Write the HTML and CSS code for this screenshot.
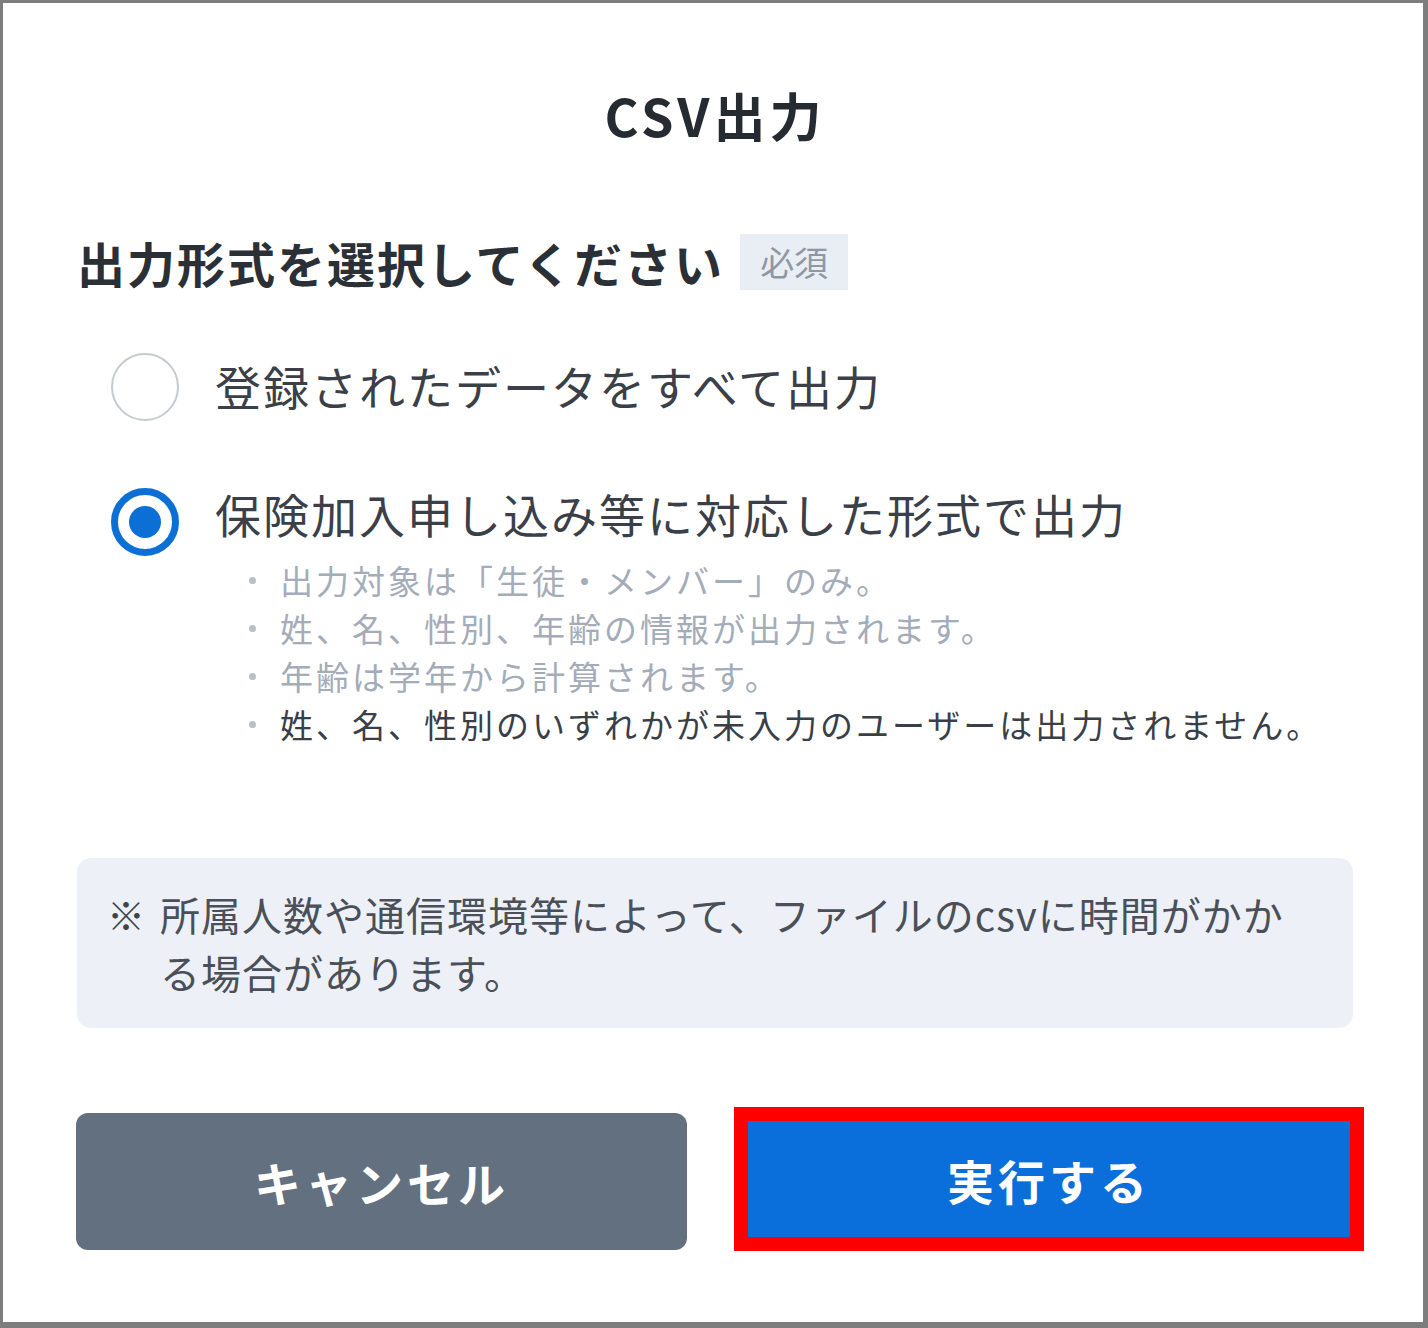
FILE: index.html
```html
<!DOCTYPE html>
<html lang="ja">
<head>
<meta charset="utf-8">
<title>CSV出力</title>
<link rel="stylesheet" href="styles.css">
</head>
<body>
<div class="frame">
  <h1 class="title">CSV出力</h1>

  <div class="field-head">
    <span class="field-label">出力形式を選択してください</span>
    <span class="badge">必須</span>
  </div>

  <div class="options">
    <div class="option">
      <span class="radio"></span>
      <div class="option-body">
        <div class="option-text">登録されたデータをすべて出力</div>
      </div>
    </div>
    <div class="option option-checked">
      <span class="radio radio-on"><span class="radio-dot"></span></span>
      <div class="option-body">
        <div class="option-text">保険加入申し込み等に対応した形式で出力</div>
        <ul class="notes">
          <li>出力対象は「生徒・メンバー」のみ。</li>
          <li>姓、名、性別、年齢の情報が出力されます。</li>
          <li>年齢は学年から計算されます。</li>
          <li class="note-strong">姓、名、性別のいずれかが未入力のユーザーは出力されません。</li>
        </ul>
      </div>
    </div>
  </div>

  <div class="notice">
    <span class="notice-mark">※</span>
    <p class="notice-text">所属人数や通信環境等によって、ファイルのcsvに時間がかかる場合があります。</p>
  </div>

  <div class="actions">
    <button class="btn btn-cancel">キャンセル</button>
    <div class="highlight">
      <button class="btn btn-primary">実行する</button>
    </div>
  </div>
</div>
</body>
</html>
```

FILE: styles.css
```css
* { box-sizing: border-box; }
html, body { margin: 0; padding: 0; background: #ffffff; }
body {
  font-family: "Noto Sans CJK JP", "Noto Sans", sans-serif;
  color: #2b2f36;
}
.frame {
  width: 1428px;
  height: 1328px;
  border-style: solid;
  border-color: #7d7d7d;
  border-width: 3px 5px 6px 3px;
  padding: 77px 70px 0 74px;
  background: #ffffff;
}
.title {
  margin: 0;
  font-size: 52px;
  line-height: 70px;
  font-weight: 700;
  text-align: center;
  color: #262a31;
  letter-spacing: 4px;
}
.field-head {
  margin-top: 84px;
  display: flex;
  align-items: center;
  height: 56px;
}
.field-label {
  font-size: 48px;
  font-weight: 700;
  letter-spacing: 2px;
  line-height: 56px;
  color: #2b2f36;
}
.badge {
  margin-left: 16px;
  height: 56px;
  padding: 0 20px;
  background: #e9eef5;
  color: #8e97a2;
  font-size: 34px;
  line-height: 56px;
}
.options {
  margin-top: 63px;
  padding-left: 34px;
}
.option {
  display: flex;
  align-items: flex-start;
}
.option + .option { margin-top: 67px; }
.radio {
  flex: 0 0 68px;
  width: 68px;
  height: 68px;
  border-radius: 50%;
  border: 2px solid #c6cad0;
  display: flex;
  align-items: center;
  justify-content: center;
}
.radio-on {
  border: 7px solid #0b6fd6;
}
.radio-dot {
  width: 32px;
  height: 32px;
  border-radius: 50%;
  background: #0b6fd6;
}
.option-body {
  margin-left: 36px;
}
.option-text {
  font-size: 46px;
  line-height: 64px;
  letter-spacing: 2px;
  color: #3b4048;
}
.option-checked .option-text {
  line-height: 50px;
}
.notes {
  list-style: none;
  margin: 18px 0 0 0;
  padding: 0;
}
.notes li {
  display: flex;
  align-items: center;
  font-size: 33px;
  line-height: 48px;
  letter-spacing: 3px;
  color: #a3acb8;
}
.notes li::before {
  content: "";
  flex: 0 0 7px;
  width: 7px;
  height: 7px;
  border-radius: 50%;
  background: #b8bfc8;
  margin: 0 24px 0 34px;
}
.notes li.note-strong { color: #3a3f47; }
.notice {
  margin-top: 110px;
  display: flex;
  align-items: flex-start;
  background: #edf1f7;
  border-radius: 14px;
  padding: 27px 40px 27px 30px;
  height: 170px;
}
.notice-mark {
  flex: 0 0 53px;
  font-size: 38px;
  font-weight: 700;
  line-height: 58px;
  color: #3f444c;
}
.notice-text {
  margin: 0;
  font-size: 40px;
  line-height: 58px;
  letter-spacing: 1px;
  color: #4b5058;
}
.actions {
  margin-top: 79px;
  display: flex;
  align-items: flex-start;
  gap: 47px;
  margin-left: -1px;
}
.btn {
  border: 0;
  font-family: "Noto Sans CJK JP", "Noto Sans", sans-serif;
  font-weight: 700;
  font-size: 47px;
  letter-spacing: 4px;
  color: #ffffff;
  cursor: pointer;
}
.btn-cancel {
  flex: 0 0 611px;
  width: 611px;
  height: 137px;
  margin-top: 6px;
  background: #637080;
  border-radius: 12px;
}
.highlight {
  flex: 0 0 630px;
  width: 630px;
  height: 144px;
  border: 14px solid #ff0000;
}
.btn-primary {
  display: block;
  width: 100%;
  height: 100%;
  background: #0a6edb;
  border-radius: 0;
}
```
